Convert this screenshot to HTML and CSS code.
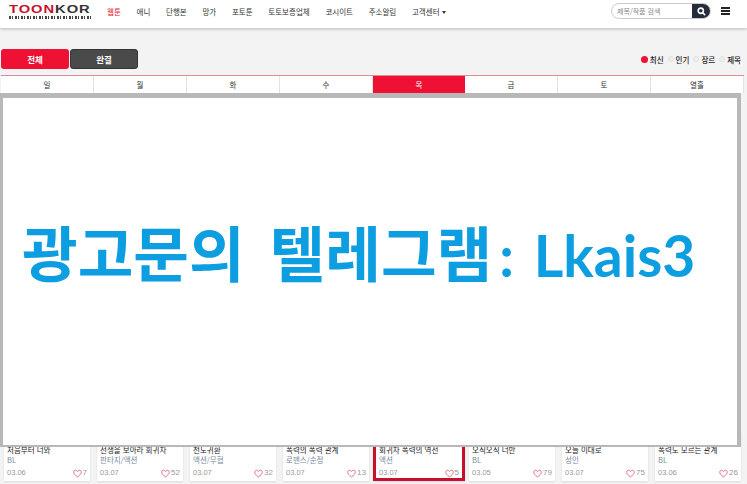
FILE: index.html
```html
<!DOCTYPE html>
<html lang="ko">
<head>
    <meta charset="UTF-8">
    <meta name="viewport" content="width=device-width, initial-scale=1.0">
    <title>TOONKOR</title>
    <link rel="stylesheet" href="styles.css">
</head>
<body>
    <svg class="defs" width="0" height="0"><symbol id="heart" viewBox="0 0 12 11"><path d="M6 10C2.5 7.400 1 5.800 1 3.800 1 2.200 2.100 1.200 3.400 1.200 4.500 1.200 5.400 1.800 6 2.900 6.600 1.800 7.500 1.200 8.600 1.200 9.900 1.200 11 2.200 11 3.800 11 5.800 9.500 7.400 6 10Z"/></symbol></svg>

    <header class="top">
        <div class="logo">
            <div class="logo-word"><span class="logo-red">TOON</span>KOR</div>
            <div class="logo-bars"></div>
        </div>
        <nav class="menu">
            <a class="on">웹툰</a>
            <a>애니</a>
            <a>단행본</a>
            <a>망가</a>
            <a>포토툰</a>
            <a>토토보증업체</a>
            <a>코시이트</a>
            <a>주소알림</a>
            <a>고객센터<span class="caret"></span></a>
        </nav>
        <div class="search">
            <span class="search-text">제목/작품 검색</span>
            <span class="search-btn">
                <svg width="9" height="9" viewBox="0 0 10 10"><circle cx="4.200" cy="4.200" r="2.900" fill="none" stroke="#fff" stroke-width="1.800"/><path d="M6.400 6.400L9 9" stroke="#fff" stroke-width="1.800"/></svg>
            </span>
        </div>
        <div class="burger"><i></i><i></i><i></i></div>
    </header>

    <main class="content">
        <div class="filter">
            <div class="btns">
                <button class="btn btn-red">전체</button>
                <button class="btn btn-dark">완결</button>
            </div>
            <div class="sort">
                <span class="dot dot-on"></span><b>최신</b>
                <span class="dot"></span><b>인기</b>
                <span class="dot"></span><b>장르</b>
                <span class="dot"></span><b>제목</b>
            </div>
        </div>

        <div class="days">
            <a>일</a>
            <a>월</a>
            <a>화</a>
            <a>수</a>
            <a class="today">목</a>
            <a>금</a>
            <a>토</a>
            <a>열흘</a>
        </div>

        <div class="cards">
            <div class="card">
                <div class="c-title">처음부터 너와</div>
                <div class="c-genre">BL</div>
                <div class="c-foot"><span>03.06</span><span class="like"><svg class="heart"><use href="#heart"/></svg>7</span></div>
            </div>
            <div class="card">
                <div class="c-title">전생을 보아라 회귀자</div>
                <div class="c-genre">판타지/액션</div>
                <div class="c-foot"><span>03.07</span><span class="like"><svg class="heart"><use href="#heart"/></svg>52</span></div>
            </div>
            <div class="card">
                <div class="c-title">천도귀환</div>
                <div class="c-genre">액션/무협</div>
                <div class="c-foot"><span>03.07</span><span class="like"><svg class="heart"><use href="#heart"/></svg>32</span></div>
            </div>
            <div class="card">
                <div class="c-title">폭력의 폭력 관계</div>
                <div class="c-genre">로맨스/순정</div>
                <div class="c-foot"><span>03.07</span><span class="like"><svg class="heart"><use href="#heart"/></svg>13</span></div>
            </div>
            <div class="card card-new">
                <div class="c-title">회귀자 폭력의 역전</div>
                <div class="c-genre">액션</div>
                <div class="c-foot"><span>03.07</span><span class="like"><svg class="heart"><use href="#heart"/></svg>5</span></div>
            </div>
            <div class="card">
                <div class="c-title">오직오직 너만</div>
                <div class="c-genre">BL</div>
                <div class="c-foot"><span>03.05</span><span class="like"><svg class="heart"><use href="#heart"/></svg>79</span></div>
            </div>
            <div class="card">
                <div class="c-title">오늘 이대로</div>
                <div class="c-genre">성인</div>
                <div class="c-foot"><span>03.07</span><span class="like"><svg class="heart"><use href="#heart"/></svg>75</span></div>
            </div>
            <div class="card">
                <div class="c-title">폭력도 모르는 관계</div>
                <div class="c-genre">BL</div>
                <div class="c-foot"><span>03.06</span><span class="like"><svg class="heart"><use href="#heart"/></svg>26</span></div>
            </div>
        </div>
    </main>

    <div class="popup">
        <div class="popup-text">광고문의 텔레그램<span class="popup-id">: Lkais3</span></div>
    </div>
</body>
</html>
```
FILE: styles.css
```css
html, body {
    height: 100%;
}
body {
    font-family: "Noto Sans CJK KR", "Liberation Sans", sans-serif;
    background-color: #f3f3f3;
    color: #222;
    margin: 0;
    padding: 0;
    overflow: hidden;
    position: relative;
}
.defs {
    display: block;
}
.top {
    display: flex;
    align-items: center;
    height: 28px;
    box-sizing: border-box;
    background-color: #fff;
    box-shadow: 0 1px 3px rgba(0, 0, 0, 0.25);
    padding: 0 17px 6px 9px;
}
.logo {
    width: 82px;
    margin-right: 16px;
}
.logo-word {
    font-family: "Liberation Sans", sans-serif;
    font-weight: bold;
    font-size: 11.500px;
    line-height: 10px;
    letter-spacing: 0.750px;
    color: #333;
    transform: scaleX(1.280);
    transform-origin: left;
    white-space: nowrap;
}
.logo-red {
    color: #c8102e;
}
.logo-bars {
    height: 3px;
    margin-top: 2px;
    background: repeating-linear-gradient(90deg, #444 0 2px, #fff 2px 3px, #444 3px 4px, #fff 4px 6px);
}
.menu {
    display: flex;
    gap: 15.700px;
    font-size: 7.500px;
    color: #333;
    flex: 1;
}
.menu .on {
    color: #e8112d;
}
.caret {
    display: inline-block;
    margin-left: 2px;
    vertical-align: 1px;
    border-top: 3px solid #333;
    border-left: 2.500px solid transparent;
    border-right: 2.500px solid transparent;
}
.search {
    display: flex;
    width: 100px;
    height: 16px;
    border: 1px solid #ccc;
    border-radius: 9px;
    box-sizing: border-box;
    overflow: hidden;
    margin-right: 10px;
}
.search-text {
    flex: 1;
    font-size: 7px;
    line-height: 14px;
    color: #888;
    padding-left: 5px;
}
.search-btn {
    display: flex;
    align-items: center;
    justify-content: center;
    width: 18px;
    background-color: #252d3a;
}
.burger {
    display: flex;
    flex-direction: column;
    gap: 1px;
    width: 9px;
}
.burger i {
    height: 2px;
    background-color: #222;
}
.content {
    padding: 21px 0 0 1px;
}
.filter {
    display: flex;
    justify-content: space-between;
    align-items: center;
    padding-right: 4px;
}
.btns {
    display: flex;
    gap: 1px;
}
.btn {
    width: 68px;
    height: 20px;
    border: 0;
    border-radius: 3px;
    padding: 0;
    color: #fff;
    font-family: inherit;
    font-size: 8.500px;
    font-weight: bold;
}
.btn-red {
    background-color: #ee1133;
}
.btn-dark {
    background-color: #4a4a4a;
    border: 1px solid #333;
}
.sort {
    display: flex;
    align-items: center;
    gap: 2px;
    font-size: 7.500px;
}
.sort b {
    margin-right: 2px;
    font-weight: 500;
}
.dot {
    width: 6px;
    height: 6px;
    box-sizing: border-box;
    border-radius: 50%;
    background-color: #eee;
    border: 1px solid #e2e2e2;
}
.dot-on {
    width: 7px;
    height: 7px;
    background-color: #ee1133;
    border: 0;
}
.days {
    display: flex;
    margin-top: 6px;
    margin-right: 3px;
    height: 18px;
    background-color: #fff;
    border-top: 1px solid #e08a98;
    font-size: 7.500px;
    color: #333;
}
.days a {
    flex: 1;
    text-align: center;
    line-height: 17px;
    border-right: 1px solid #e2e2e2;
}
.days .today {
    background-color: #ee1133;
    color: #fff;
    border-right: 0;
}
.cards {
    display: grid;
    grid-template-columns: repeat(8, 86px);
    gap: 7px;
    margin-top: 353px;
    padding-left: 3px;
}
.card {
    height: 48px;
    box-sizing: border-box;
    margin-top: -14px;
    padding: 12px 3px 0 3px;
    background-color: #fff;
    box-shadow: 0 1px 2px rgba(0, 0, 0, 0.1);
    font-size: 7.500px;
    line-height: 10px;
}
.card-new {
    margin-left: -3px;
    margin-right: -3px;
    border: 3px solid #c8102e;
    border-top: 0;
}
.c-title {
    white-space: nowrap;
    overflow: hidden;
}
.c-genre {
    color: #7a8aa0;
}
.c-foot {
    display: flex;
    justify-content: space-between;
    margin-top: 3px;
    color: #999;
    font-family: "Liberation Sans", sans-serif;
    font-size: 7.500px;
}
.like {
    display: flex;
    align-items: center;
    gap: 1px;
    font-size: 8px;
}
.heart {
    width: 9px;
    height: 9px;
    fill: none;
    stroke: #d9475c;
    stroke-width: 1;
}
.popup {
    position: absolute;
    left: 0;
    top: 93px;
    width: 741px;
    height: 354px;
    box-sizing: border-box;
    background-color: #fff;
    border-style: solid;
    border-color: #b8b8b8;
    border-width: 5px 4px 2px 3px;
    display: flex;
    align-items: center;
    padding: 0 0 38px 19px;
}
.popup-text {
    font-weight: bold;
    font-size: 60.500px;
    line-height: 1;
    word-spacing: 8px;
    color: #0c9ee0;
    white-space: nowrap;
}
.popup-id {
    font-family: Lato, sans-serif;
    font-weight: bold;
    font-size: 57px;
    margin-left: 7px;
    word-spacing: 6px;
}
```
